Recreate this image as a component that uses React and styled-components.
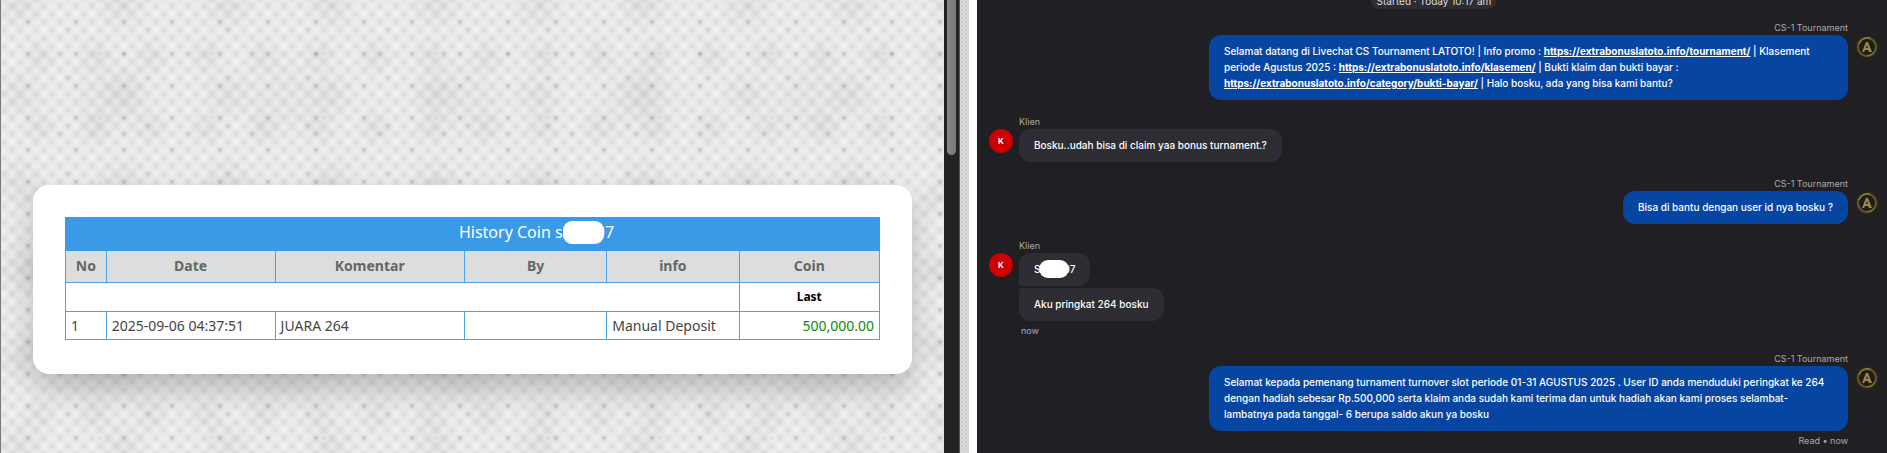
import React from "react";
import styled, { createGlobalStyle, css } from "styled-components";

const GlobalStyle = createGlobalStyle`
  * {
    box-sizing: border-box;
  }

  body {
    margin: 0;
    background-color: #fff;
  }
`;

const Page = styled.div`
  display: grid;
  grid-template-columns: 944fr 16px 9px 8px 910fr;
  height: 100vh;
  min-height: 453px;
  overflow: hidden;
`;

const dot = (color, size) => `radial-gradient(circle, ${color} 0, transparent ${size}px)`;

const fabric = css`
  background-color: #e9e9e9;
  background-image:
    ${dot("rgba(0, 0, 0, 0.12)", 3)},
    ${dot("rgba(0, 0, 0, 0.1)", 3)},
    ${dot("rgba(0, 0, 0, 0.1)", 3)},
    ${dot("rgba(0, 0, 0, 0.08)", 3)},
    ${dot("rgba(0, 0, 0, 0.07)", 4)},
    ${dot("rgba(0, 0, 0, 0.05)", 4)},
    ${dot("rgba(255, 255, 255, 0.4)", 5)},
    ${dot("rgba(255, 255, 255, 0.3)", 5)},
    ${dot("rgba(0, 0, 0, 0.05)", 20)},
    ${dot("rgba(0, 0, 0, 0.05)", 28)},
    ${dot("rgba(0, 0, 0, 0.03)", 50)};
  background-size:
    48px 32px,
    80px 48px,
    64px 80px,
    112px 64px,
    16px 16px,
    16px 16px,
    16px 16px,
    16px 16px,
    56px 72px,
    104px 88px,
    176px 136px;
  background-position:
    3px 6px,
    27px 6px,
    27px 14px,
    43px 22px,
    3px 14px,
    11px 6px,
    3px 6px,
    11px 14px,
    10px 20px,
    70px 50px,
    20px 30px;
`;

const Report = styled.main`
  ${fabric}
  min-width: 0;
  overflow: hidden;
  border-left: 1px solid #777;
  padding: 185px 32px 0;
`;

const Card = styled.section`
  background-color: #fff;
  border-radius: 16px;
  padding: 32px 32px 34px;
  box-shadow: 0 14px 28px rgba(0, 0, 0, 0.22);
`;

const Table = styled.table`
  width: 100%;
  table-layout: fixed;
  border-collapse: collapse;
  font-family: "Noto Sans", "Segoe UI", sans-serif;
  font-size: 14px;
  line-height: 20px;
  color: #444;
`;

const Title = styled.th`
  height: 33px;
  padding: 0 0 2px 128px;
  background-color: #3a9ae8;
  border: 1px solid #3a9ae8;
  color: #fff;
  font-size: 16px;
  font-weight: 400;
`;

const Head = styled.th`
  height: 32px;
  padding: 0 4px 2px;
  background-color: #ddd;
  border: 1px solid #4ba3e9;
  color: #666;
  font-weight: 700;
`;

const Cell = styled.td`
  height: 28px;
  padding: 0 5px;
  border: 1px solid #4ba3e9;
  text-align: ${({ $align }) => $align || "left"};
  color: ${({ $color }) => $color || "inherit"};
`;

const Last = styled(Cell)`
  height: 29px;
  font-size: 12px;
  font-weight: 700;
`;

const Mask = styled.span`
  display: inline-block;
  position: relative;
  vertical-align: middle;
  width: ${({ $large }) => ($large ? 41 : 30)}px;
  height: ${({ $large }) => ($large ? 23 : 18)}px;
  margin: ${({ $large }) => ($large ? "-2px -8px 0 -4px" : "-4px -6px -2px -1px")};
  border-radius: 9px;
  background-color: #fff;
`;

const Scrollbar = styled.div`
  background-color: #222;
  border-right: 1px solid #555;
  padding: 0 3px;
`;

const Thumb = styled.div`
  height: 155px;
  border-radius: 0 0 5px 5px;
  background: linear-gradient(90deg, #888, #777);
`;

const Strip = styled.div`
  background-color: #dedede;
  background-image: ${dot("rgba(0, 0, 0, 0.3)", 1)}, ${dot("rgba(0, 0, 0, 0.2)", 1)};
  background-size: 4px 4px;
  background-position: 0 0, 2px 2px;
`;

const Chat = styled.section`
  display: flex;
  flex-direction: column;
  justify-content: flex-end;
  gap: 16px;
  grid-column: 5;
  min-width: 0;
  overflow: hidden;
  padding: 0 8px 6px 12px;
  background-color: #202024;
  color: #fff;
  font-family: Inter, "Liberation Sans", sans-serif;
  font-size: 10px;
  line-height: 16px;
`;

const Started = styled.div`
  align-self: center;
  margin-bottom: -3px;
  padding: 2px 6px 0;
  border-radius: 9px;
  background-color: #2d2d33;
  color: #ddd;
`;

const Group = styled.div`
  display: flex;
  flex-direction: ${({ $agent }) => ($agent ? "row-reverse" : "row")};
  gap: ${({ $agent }) => ($agent ? 7 : 6)}px;
`;

const Avatar = styled.div`
  flex: 0 0 24px;
  height: 24px;
  margin-top: 13px;
  border-radius: 50%;
  background-color: ${({ $agent }) => ($agent ? "transparent" : "#cc0000")};
  font-size: 8px;
  font-weight: 700;
  line-height: 24px;
  text-align: center;

  svg {
    display: block;
  }
`;

const Stack = styled.div`
  display: flex;
  flex-direction: column;
  align-items: ${({ $agent }) => ($agent ? "flex-end" : "flex-start")};
  max-width: 639px;
`;

const Author = styled.div`
  padding-bottom: 2px;
  color: #aaaab0;
  font-size: 9px;
  line-height: 11px;
`;

const Bubble = styled.div`
  padding: 8px 15px 9px;
  border-radius: 12px;
  background-color: ${({ $agent }) => ($agent ? "#0745a3" : "#2d2d33")};
  font-weight: 500;

  & + & {
    margin-top: 2px;
    border-top-left-radius: 2px;
  }

  &:has(+ &) {
    border-bottom-left-radius: 2px;
  }

  a {
    color: #fff;
    font-weight: 700;
  }
`;

const Status = styled.div`
  padding: 4px 0 0 2px;
  color: #aaaab0;
  font-size: 9px;
  line-height: 12px;
`;

const Emblem = () => (
  <svg width="24" height="24" viewBox="0 0 24 24" aria-hidden="true">
    <circle cx="12" cy="12" r="11" fill="#2e2a17" />
    <circle cx="12" cy="12" r="9" fill="#1f1d19" stroke="#685b22" strokeWidth="2" />
    <path d="M4 9a9 9 0 0 1 11-6" fill="none" stroke="#a2934b" strokeWidth="1" />
    <path d="M19 17a9 9 0 0 1-7 4" fill="none" stroke="#8a7b35" strokeWidth="1" />
    <path d="M11 7h2l4 10h-3l-1-2h-3l-1 2H7zm1 3-1 3h2z" fill="#9a874a" fillRule="evenodd" />
  </svg>
);

const Message = ({ agent, status, children }) => (
  <Group $agent={agent}>
    <Avatar $agent={agent}>{agent ? <Emblem /> : "K"}</Avatar>
    <Stack $agent={agent}>
      <Author>{agent ? "CS-1 Tournament" : "Klien"}</Author>
      {children}
      {status && <Status>{status}</Status>}
    </Stack>
  </Group>
);

const columns = [
  { name: "No", width: "5%" },
  { name: "Date", width: "20.75%" },
  { name: "Komentar", width: "23.25%" },
  { name: "By", width: "17.5%" },
  { name: "info", width: "16.25%" },
  { name: "Coin", width: "17.25%" },
];

const HistoryTable = () => (
  <Table>
    <colgroup>
      {columns.map((column) => (
        <col key={column.name} width={column.width} />
      ))}
    </colgroup>
    <thead>
      <tr>
        <Title colSpan={6}>
          History Coin sl
          <Mask $large />
          07
        </Title>
      </tr>
      <tr>
        {columns.map((column) => (
          <Head key={column.name}>{column.name}</Head>
        ))}
      </tr>
    </thead>
    <tbody>
      <tr>
        <Cell colSpan={5} />
        <Last $align="center" $color="#000">Last</Last>
      </tr>
      <tr>
        <Cell>1</Cell>
        <Cell>2025-09-06 04:37:51</Cell>
        <Cell>JUARA 264</Cell>
        <Cell />
        <Cell>Manual Deposit</Cell>
        <Cell $align="right" $color="#0a8a0a">500,000.00</Cell>
      </tr>
    </tbody>
  </Table>
);

const App = () => {
  return (
    <>
      <GlobalStyle />
      <Page>
        <Report>
          <Card>
            <HistoryTable />
          </Card>
        </Report>
        <Scrollbar>
          <Thumb />
        </Scrollbar>
        <Strip />

        <Chat>
          <Started>Started · Today 10:17 am</Started>

          <Message agent>
            <Bubble $agent>
              Selamat datang di Livechat CS Tournament LATOTO! | Info promo :{" "}
              <a href="https://extrabonuslatoto.info/tournament/">https://extrabonuslatoto.info/tournament/</a> | Klasement
              periode Agustus 2025 :{" "}
              <a href="https://extrabonuslatoto.info/klasemen/">https://extrabonuslatoto.info/klasemen/</a> | Bukti klaim dan
              bukti bayar :{" "}
              <a href="https://extrabonuslatoto.info/category/bukti-bayar/">https://extrabonuslatoto.info/category/bukti-bayar/</a>{" "}
              | Halo bosku, ada yang bisa kami bantu?
            </Bubble>
          </Message>

          <Message>
            <Bubble>Bosku..udah bisa di claim yaa bonus turnament.?</Bubble>
          </Message>

          <Message agent>
            <Bubble $agent>Bisa di bantu dengan user id nya bosku ?</Bubble>
          </Message>

          <Message status="now">
            <Bubble>
              S<Mask />07
            </Bubble>
            <Bubble>Aku pringkat 264 bosku</Bubble>
          </Message>

          <Message agent status="Read • now">
            <Bubble $agent>
              Selamat kepada pemenang turnament turnover slot periode 01-31 AGUSTUS 2025 . User ID anda menduduki peringkat ke
              264 dengan hadiah sebesar Rp.500,000 serta klaim anda sudah kami terima dan untuk hadiah akan kami proses
              selambat-lambatnya pada tanggal- 6 berupa saldo akun ya bosku
            </Bubble>
          </Message>
        </Chat>
      </Page>
    </>
  );
};

export default App;
